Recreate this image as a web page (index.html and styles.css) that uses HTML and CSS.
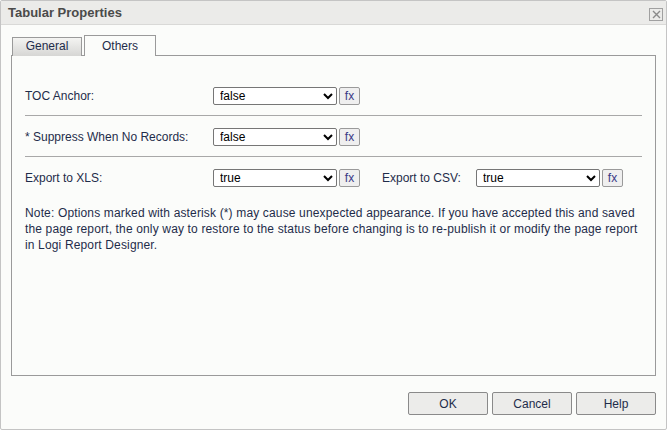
FILE: index.html
```html
<!DOCTYPE html>
<html>
<head>
<meta charset="utf-8">
<link rel="stylesheet" href="styles.css">
</head>
<body>
<div class="window">
  <div class="titlebar">
    <span class="title">Tabular Properties</span>
    <span class="close">
      <svg width="9" height="9" viewBox="0 0 9 9"><path d="M1 1L8 8M8 1L1 8" stroke="#8a8a8a" stroke-width="1.4"/></svg>
    </span>
  </div>
  <div class="body">
    <div class="tabs">
      <div class="tab">General</div>
      <div class="tab active">Others</div>
    </div>
    <div class="panel">
      <div class="row">
        <span class="label">TOC Anchor:</span>
        <select class="sel"><option>false</option></select>
        <button class="fx">fx</button>
      </div>
      <div class="row">
        <span class="label">* Suppress When No Records:</span>
        <select class="sel"><option>false</option></select>
        <button class="fx">fx</button>
      </div>
      <div class="row last">
        <span class="label">Export to XLS:</span>
        <select class="sel"><option>true</option></select>
        <button class="fx">fx</button>
        <span class="label2">Export to CSV:</span>
        <select class="sel"><option>true</option></select>
        <button class="fx">fx</button>
      </div>
      <p class="note">Note: Options marked with asterisk (*) may cause unexpected appearance. If you have accepted this and saved the page report, the only way to restore to the status before changing is to re-publish it or modify the page report in Logi Report Designer.</p>
    </div>
    <div class="footer">
      <button class="btn">OK</button>
      <button class="btn">Cancel</button>
      <button class="btn">Help</button>
    </div>
  </div>
</div>
</body>
</html>
```
FILE: styles.css
```css
* { box-sizing: border-box; }
html, body { margin: 0; padding: 0; }
body {
  width: 667px;
  height: 430px;
  background: #fbfcfa;
  font-family: "Liberation Sans", Arial, sans-serif;
  font-size: 12px;
  color: #1f2c4a;
  overflow: hidden;
}
.window {
  width: 667px;
  height: 430px;
  border: 1px solid #c4c4c4;
  border-radius: 2px;
  display: flex;
  flex-direction: column;
  background: #fbfcfa;
}
.titlebar {
  height: 24px;
  flex: none;
  background: #ebebe9;
  border-bottom: 1px solid #d9d9d7;
  display: flex;
  align-items: center;
  justify-content: space-between;
  padding: 0 3px 0 7px;
}
.title {
  font-weight: bold;
  font-size: 13px;
  color: #4a4a4a;
}
.close {
  width: 14px;
  height: 13px;
  border: 1px solid #a0a0a0;
  display: flex;
  align-items: center;
  justify-content: center;
  margin-top: 4px;
}
.body {
  flex: 1;
  display: flex;
  flex-direction: column;
  padding: 10px 10px 14px 10px;
}
.tabs {
  display: flex;
  align-items: flex-end;
  gap: 2px;
  padding-left: 1px;
  height: 21px;
  margin-bottom: -1px;
  position: relative;
  z-index: 1;
}
.tab {
  height: 19px;
  width: 70px;
  border: 1px solid #9a9a9a;
  border-bottom: none;
  background: linear-gradient(#f4f4f2, #d6d6d4);
  text-align: center;
  line-height: 17px;
  color: #1f2c4a;
}
.tab.active {
  height: 21px;
  width: 72px;
  background: #fbfcfa;
  line-height: 20px;
}
.panel {
  flex: 1;
  border: 1px solid #9a9a9a;
  padding: 19px 13px 0 13px;
}
.row {
  display: flex;
  align-items: center;
  height: 41px;
  padding-top: 2px;
  border-bottom: 1px solid #a8a8a8;
}
.row.last { border-bottom: none; height: 40px; }
.label { width: 188px; flex: none; }
.label2 { width: 94px; flex: none; margin-left: 22px; }
.sel {
  width: 124px;
  height: 18px;
  font-family: "Liberation Sans", Arial, sans-serif;
  font-size: 12px;
  color: #000;
  border: 1px solid #767676;
  border-radius: 2px;
  background: #fff;
  padding: 0 0 0 2px;
  margin: 0;
}
.fx {
  width: 21px;
  height: 18px;
  margin: -1px 0 0 2px;
  padding: 0;
  border: 1px solid #9a9a9a;
  border-radius: 2px;
  background: #efefef;
  font-family: "Liberation Sans", Arial, sans-serif;
  font-size: 12px;
  color: #3b3a86;
  line-height: 14px;
}
.note {
  margin: 8px 0 0 0;
  line-height: 16px;
  letter-spacing: 0.15px;
  color: #1f2c4a;
}
.footer {
  display: flex;
  justify-content: flex-end;
  gap: 4px;
  margin-top: 16px;
}
.btn {
  width: 80px;
  height: 23px;
  margin: 0;
  border: 1px solid #8a8a8a;
  border-radius: 2px;
  background: #ececea;
  font-family: "Liberation Sans", Arial, sans-serif;
  font-size: 12px;
  color: #1f2c4a;
}
```
